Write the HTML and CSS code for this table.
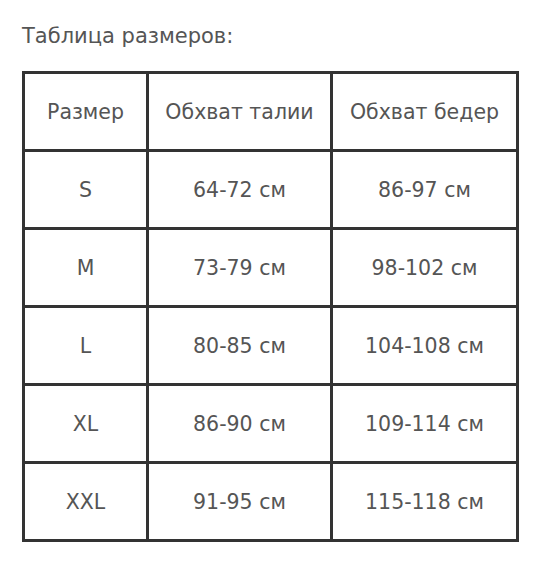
FILE: index.html
```html
<!DOCTYPE html>
<html lang="ru">
<head>
<meta charset="utf-8">
<link rel="stylesheet" href="styles.css">
</head>
<body>
<div class="page">
  <p class="title">Таблица размеров:</p>
  <table class="sizes">
    <colgroup><col class="c1"><col class="c2"><col class="c3"></colgroup>
    <tr><td>Размер</td><td>Обхват талии</td><td>Обхват бедер</td></tr>
    <tr><td>S</td><td>64-72 см</td><td>86-97 см</td></tr>
    <tr><td>M</td><td>73-79 см</td><td>98-102 см</td></tr>
    <tr><td>L</td><td>80-85 см</td><td>104-108 см</td></tr>
    <tr><td>XL</td><td>86-90 см</td><td>109-114 см</td></tr>
    <tr><td>XXL</td><td>91-95 см</td><td>115-118 см</td></tr>
  </table>
</div>
</body>
</html>
```
FILE: styles.css
```css
html, body { margin: 0; padding: 0; background: #fff; }
.page { padding: 24px 0 0 22px; font-family: "DejaVu Sans", sans-serif; color: #555; }
.title { margin: 0 0 23px 0; font-size: 21px; line-height: 24px; }
.sizes { border-collapse: collapse; table-layout: fixed; width: 494px; }
.c1 { width: 124px; }
.c2 { width: 184px; }
.c3 { width: 186px; }
.sizes td { border: 3px solid #333; height: 75px; padding: 0; text-align: center; vertical-align: middle; font-size: 20.5px; }
```
